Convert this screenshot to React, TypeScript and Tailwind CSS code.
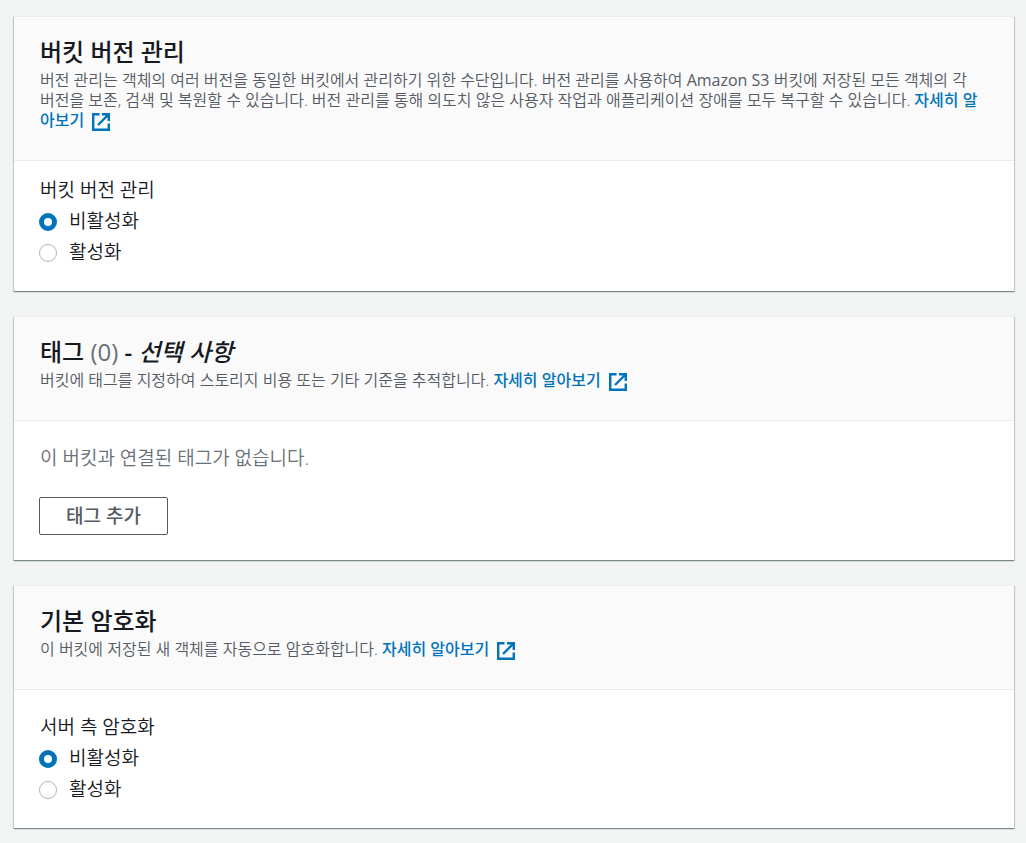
import { useState } from "react";
import type { ReactNode } from "react";

interface PanelProps {
  title: ReactNode;
  description: ReactNode;
  children: ReactNode;
}

interface RadioOptionsProps {
  name: string;
  legend: string;
}

const options = ["비활성화", "활성화"];

function ExternalIcon() {
  return (
    <span className="ml-1 inline-flex h-6 items-center align-[-5px]">
      <svg viewBox="0 0 18 18" className="h-[18px] w-[18px]" fill="none" stroke="currentColor" strokeWidth="2.4" aria-hidden="true">
        <path d="M7.5 1.2H1.2V16.8H16.8V10.5" />
        <path d="M10 1.2H16.8V8M16.5 1.5L6 12" />
      </svg>
    </span>
  );
}

function Panel({ title, description, children }: PanelProps) {
  return (
    <section className="border-t border-[#eaeded] bg-white shadow-[0_1px_1px_0_rgba(0,28,36,0.3),1px_1px_1px_0_rgba(0,28,36,0.15),-1px_1px_1px_0_rgba(0,28,36,0.15)]">
      <header className="border-b border-[#eaeded] bg-[#fafafa] px-[26px] pt-5 pb-[26px]">
        <h2 className="text-[24px] leading-[30px] font-medium">{title}</h2>
        <p className="mt-[3px] text-[16px] leading-5 font-[350] text-[#545b64]">
          <span className="break-keep">{description}</span>{" "}
          <a href="#" className="font-medium text-[#0073bb] hover:underline">
            자세히 알
            <span className="whitespace-nowrap">
              아보기 <ExternalIcon />
            </span>
          </a>
        </p>
      </header>
      {children}
    </section>
  );
}

function RadioOptions({ name, legend }: RadioOptionsProps) {
  const [selected, setSelected] = useState(options[0]);

  return (
    <fieldset className="text-[19px] leading-[31px] font-[350]">
      <legend>{legend}</legend>
      {options.map((option) => (
        <label key={option} className="flex items-center gap-3">
          <input
            type="radio"
            name={name}
            value={option}
            checked={selected === option}
            onChange={() => setSelected(option)}
            className="-ml-px h-[18px] w-[18px] appearance-none rounded-full border border-[#aab7b8] bg-white checked:border-[5px] checked:border-[#0073bb]"
          />
          {option}
        </label>
      ))}
    </fieldset>
  );
}

export default function App() {
  return (
    <main className="flex min-h-screen flex-col gap-[25px] bg-[#f2f3f3] pt-4 pr-3 pb-[13px] pl-[14px] font-['Open_Sans','Noto_Sans_CJK_KR',sans-serif] text-[#16191f]">
      <Panel
        title="버킷 버전 관리"
        description={
          <>
            버전 관리는 객체의 여러 버전을 동일한 버킷에서 관리하기 위한 수단입니다. 버전 관리를 사용하여{" "}
            <span className="font-normal">Amazon S3</span> 버킷에 저장된 모든 객체의 각 버전을 보존, 검색 및 복원할 수
            있습니다. 버전 관리를 통해 의도치 않은 사용자 작업과 애플리케이션 장애를 모두 복구할 수 있습니다.
          </>
        }
      >
        <div className="px-[26px] pt-[14px] pb-[23px]">
          <RadioOptions name="versioning" legend="버킷 버전 관리" />
        </div>
      </Panel>

      <Panel
        title={
          <>
            태그 <span className="font-normal text-[#687078]">(0)</span> <span className="font-semibold">-</span> <i>선택 사항</i>
          </>
        }
        description="버킷에 태그를 지정하여 스토리지 비용 또는 기타 기준을 추적합니다."
      >
        <div className="px-[26px] pt-[22px] pb-[25px]">
          <p className="text-[19px] leading-[31px] font-[350] text-[#687078]">이 버킷과 연결된 태그가 없습니다.</p>
          <button type="button" className="mt-[23px] -ml-px flex h-[38px] items-center rounded-[2px] border border-[#545b64] bg-white px-[26px] text-[19px] leading-[31px] font-medium text-[#545b64] hover:bg-[#fafafa]">
            태그 추가
          </button>
        </div>
      </Panel>

      <Panel title="기본 암호화" description="이 버킷에 저장된 새 객체를 자동으로 암호화합니다.">
        <div className="px-[26px] pt-[22px] pb-[23px]">
          <RadioOptions name="encryption" legend="서버 측 암호화" />
        </div>
      </Panel>
    </main>
  );
}
